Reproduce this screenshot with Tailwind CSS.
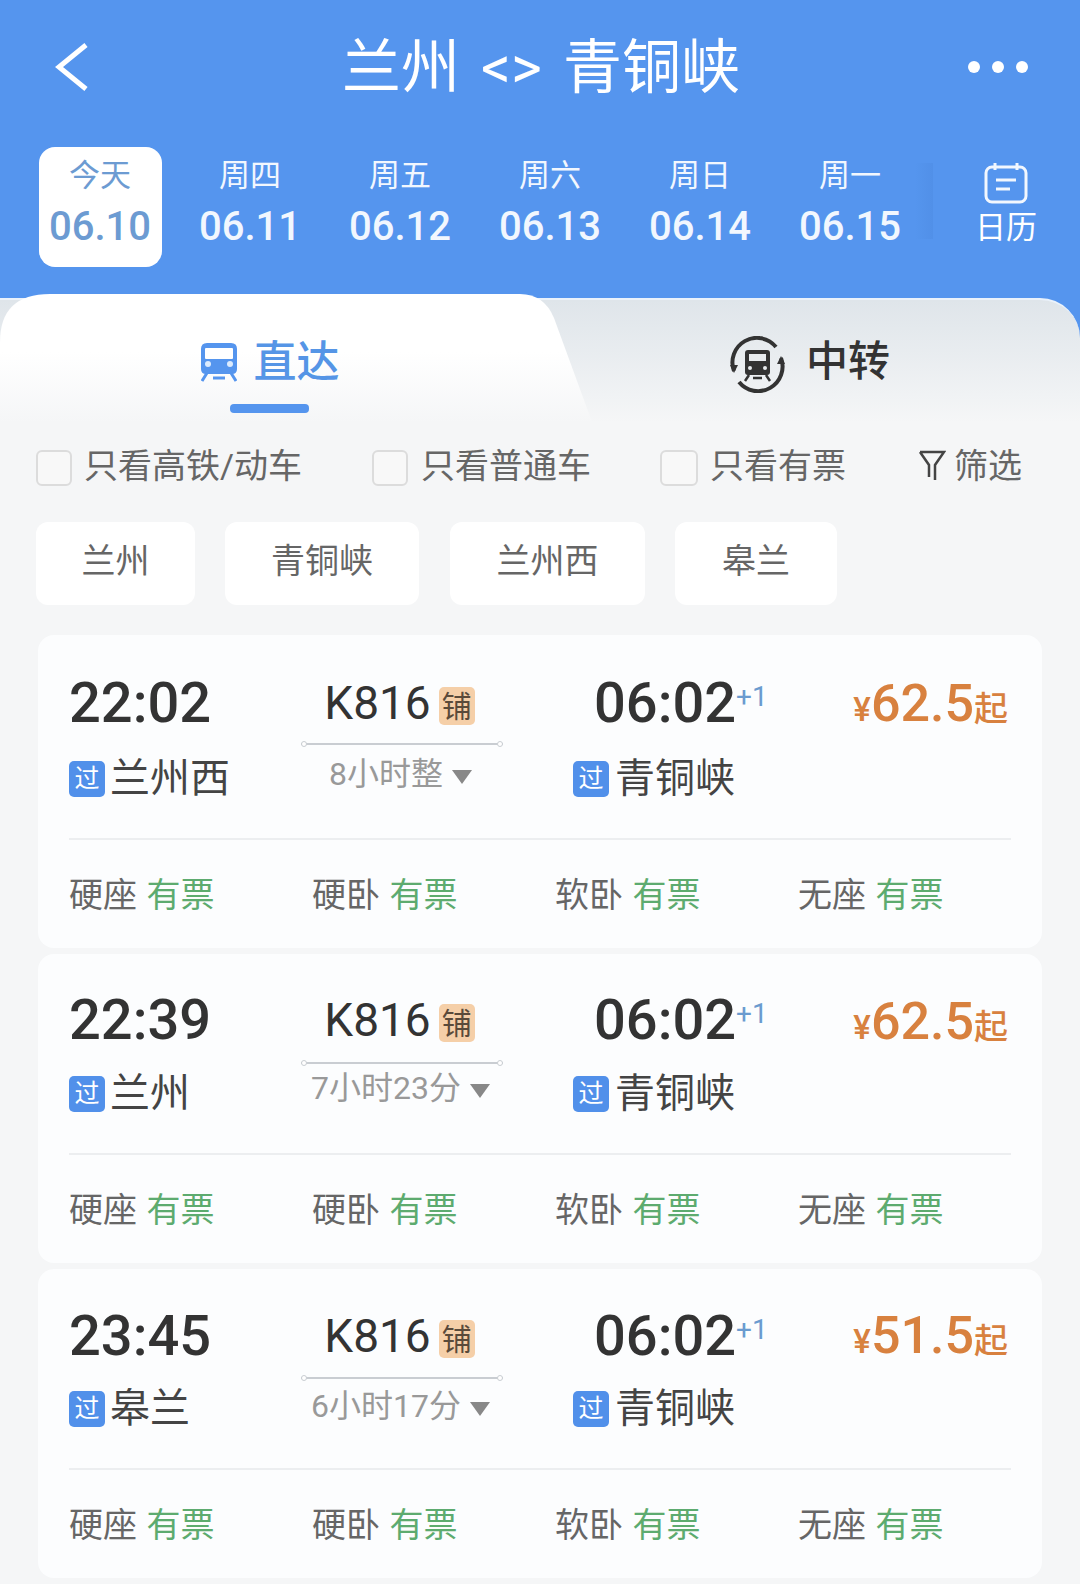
<!DOCTYPE html>
<html lang="zh">
<head>
  <meta charset="UTF-8">
  <title>兰州 &lt;&gt; 青铜峡</title>
  <script src="https://cdn.jsdelivr.net/npm/@tailwindcss/browser@4"></script>
</head>
<body class="bg-[#f5f6f7] font-['Roboto','Noto_Sans_CJK_SC',sans-serif]">
<div class="w-[1080px] h-[1584px] overflow-hidden">

  <!-- blue header -->
  <div class="bg-[#5595ee] text-white">
    <div class="flex items-center justify-between h-[134px] pl-[55px] pr-[52px]">
      <svg class="w-[34px] h-[48px]" viewBox="0 0 34 48" fill="none"><path d="M31 2 L4 24 L31 46" stroke="#fff" stroke-width="5"/></svg>
      <div class="text-[59px] leading-none flex items-center gap-[21px] ml-[25px]"><span>兰州</span><span>&lt;&gt;</span><span>青铜峡</span></div>
      <div class="flex gap-[12px]">
        <div class="w-[12px] h-[12px] rounded-full bg-white"></div>
        <div class="w-[12px] h-[12px] rounded-full bg-white"></div>
        <div class="w-[12px] h-[12px] rounded-full bg-white"></div>
      </div>
    </div>
    <div class="flex h-[164px] pt-[13px] pl-[25px]">
      <div class="w-[150px] flex justify-center">
        <div class="w-[123px] h-[120px] bg-white rounded-[16px] flex flex-col items-center text-[#6c9bd2]">
          <span class="text-[31px] leading-[36px] mt-[11px]">今天</span>
          <span class="text-[40px] leading-[44px] mt-[11px] font-medium">06.10</span>
        </div>
      </div>
      <div class="w-[150px] flex flex-col items-center text-[#f2f7fe]">
        <span class="text-[31px] leading-[36px] mt-[11px]">周四</span>
        <span class="text-[40px] leading-[44px] mt-[11px] font-medium">06.11</span>
      </div>
      <div class="w-[150px] flex flex-col items-center text-[#f2f7fe]">
        <span class="text-[31px] leading-[36px] mt-[11px]">周五</span>
        <span class="text-[40px] leading-[44px] mt-[11px] font-medium">06.12</span>
      </div>
      <div class="w-[150px] flex flex-col items-center text-[#f2f7fe]">
        <span class="text-[31px] leading-[36px] mt-[11px]">周六</span>
        <span class="text-[40px] leading-[44px] mt-[11px] font-medium">06.13</span>
      </div>
      <div class="w-[150px] flex flex-col items-center text-[#f2f7fe]">
        <span class="text-[31px] leading-[36px] mt-[11px]">周日</span>
        <span class="text-[40px] leading-[44px] mt-[11px] font-medium">06.14</span>
      </div>
      <div class="w-[150px] flex flex-col items-center text-[#f2f7fe]">
        <span class="text-[31px] leading-[36px] mt-[11px]">周一</span>
        <span class="text-[40px] leading-[44px] mt-[11px] font-medium">06.15</span>
      </div>
      <div class="w-[18px] h-[76px] mt-[16px] ml-[-10px] bg-gradient-to-r from-transparent to-[#5190e8]"></div>
      <div class="w-[146px] flex flex-col items-center">
        <svg class="w-[44px] h-[42px] mt-[15px]" viewBox="0 0 44 42" fill="none" stroke="#f2f7fe" stroke-width="3"><rect x="2" y="5" width="40" height="35" rx="6"/><path d="M11 1 V8 M33 1 V8 M12 18 H32 M12 27 H26"/></svg>
        <span class="text-[31px] leading-[36px] mt-[6px]">日历</span>
      </div>
    </div>
  </div>

  <!-- tabs, sits over the blue -->
  <div class="bg-[#5595ee]">
    <div class="relative h-[124px] rounded-tr-[40px] border-t-2 border-[#eaf2fb] bg-gradient-to-b from-[#dfe5ea] to-[#f5f6f7] flex">
      <svg class="absolute left-0 top-[-6px] w-[600px] h-[128px]" viewBox="0 0 600 128">
        <defs><linearGradient id="tabFill" x1="0" y1="0" x2="0" y2="1"><stop offset="0.45" stop-color="#ffffff"/><stop offset="1" stop-color="#f5f6f7"/></linearGradient></defs>
        <path d="M0 128 V48 Q0 0 50 0 H520 Q544 0 554 24 L592 128 Z" fill="url(#tabFill)"/>
      </svg>
      <div class="relative w-[540px] flex flex-col items-center">
        <div class="flex items-center gap-[17px] mt-[40px] ml-[0px] h-[44px]">
          <svg class="w-[36px] h-[39px]" viewBox="0 0 36 39" fill="none">
            <path fill="#5595ee" d="M6 0 H30 Q36 0 36 6 V26 Q36 31 31 31 H5 Q0 31 0 26 V6 Q0 0 6 0 Z"/>
            <rect x="4" y="5" width="28" height="11" rx="1" fill="#fff"/>
            <circle cx="7" cy="21" r="3" fill="#dcebfd"/><circle cx="29" cy="21" r="3" fill="#dcebfd"/>
            <path d="M6 30 L1 38 M30 30 L35 38 M12 35 H24" stroke="#5595ee" stroke-width="3"/>
          </svg>
          <span class="text-[43px] leading-none font-medium text-[#5595e6]">直达</span>
        </div>
        <div class="w-[79px] h-[9px] rounded-[4px] bg-[#5595ee] mt-[20px] ml-[-1px]"></div>
      </div>
      <div class="relative flex-1 flex items-start pl-[189px]">
        <div class="flex items-center gap-[20px] mt-[36px]">
          <svg class="w-[57px] h-[57px]" viewBox="0 0 57 57" fill="none">
            <path d="M5 35 A24.5 24.5 0 0 1 47 11 M52 22 A24.5 24.5 0 0 1 10 46" stroke="#333" stroke-width="4"/>
            <path d="M1 29 L9 29 L5 37 Z M56 28 L48 28 L52 20 Z" fill="#333"/>
            <path fill="#333" d="M19 14 H38 Q41 14 41 17 V36 Q41 39 38 39 H19 Q16 39 16 36 V17 Q16 14 19 14 Z"/>
            <rect x="20" y="18" width="17" height="7" fill="#e8ebee"/>
            <circle cx="21" cy="32" r="2" fill="#e8ebee"/><circle cx="36" cy="32" r="2" fill="#e8ebee"/>
            <path d="M20 39 L16 45 M37 39 L41 45 M24 42 H33" stroke="#333" stroke-width="2.5"/>
          </svg>
          <span class="text-[42px] leading-none font-medium text-[#333] mb-[6px]">中转</span>
        </div>
      </div>
    </div>
  </div>

  <!-- filters -->
  <div class="flex items-center h-[44px] mt-[22px] pl-[36px] text-[34px] text-[#666] relative">
    <div class="w-[36px] h-[36px] rounded-[6px] border-2 border-[#dcdcdc] bg-[#f8f8f8] mt-[4px]"></div>
    <span class="ml-[12px] leading-none">只看高铁/动车</span>
    <div class="w-[36px] h-[36px] rounded-[6px] border-2 border-[#dcdcdc] bg-[#f8f8f8] ml-[70px] mt-[4px]"></div>
    <span class="ml-[13px] leading-none">只看普通车</span>
    <div class="w-[38px] h-[36px] rounded-[6px] border-2 border-[#dcdcdc] bg-[#f8f8f8] ml-[69px] mt-[4px]"></div>
    <span class="ml-[12px] leading-none">只看有票</span>
    <svg class="w-[28px] h-[32px] ml-[72px]" viewBox="0 0 28 32" fill="none" stroke="#444" stroke-width="2.5"><path d="M2 2 H26 L17 15 V30 M2 2 L11 15 V27"/></svg>
    <span class="ml-[8px] leading-none">筛选</span>
  </div>

  <!-- station chips -->
  <div class="flex mt-[34px] ml-[36px] h-[83px] text-[34px] text-[#666]">
    <div class="w-[159px] rounded-[12px] bg-white flex items-center justify-center pb-[4px]">兰州</div>
    <div class="w-[194px] rounded-[12px] bg-white flex items-center justify-center pb-[4px] ml-[30px]">青铜峡</div>
    <div class="w-[195px] rounded-[12px] bg-white flex items-center justify-center pb-[4px] ml-[31px]">兰州西</div>
    <div class="w-[162px] rounded-[12px] bg-white flex items-center justify-center pb-[4px] ml-[30px]">皋兰</div>
  </div>

  <!-- trains -->
  <div class="flex flex-col gap-[6px] mt-[30px] ml-[38px] w-[1004px]">

    <div class="h-[313px] rounded-[16px] bg-[#fcfdfe] pl-[31px] pr-[31px]">
      <div class="flex h-[205px] border-b-2 border-[#eceef0]">
        <div class="w-[232px] pt-[33px]">
          <div class="text-[56px] leading-[70px] font-medium text-[#333]">22:02</div>
          <div class="flex items-center gap-[5px] h-[44px] mt-[19px]">
            <span class="w-[36px] h-[36px] rounded-[5px] bg-[#5190ea] text-white text-[25px] flex items-center justify-center">过</span>
            <span class="text-[40px] text-[#444]">兰州西</span>
          </div>
        </div>
        <div class="w-[202px] pt-[33px] flex flex-col items-center">
          <div class="flex items-center h-[70px] gap-[8px] mr-[5px]">
            <span class="text-[46px] text-[#333]">K816</span>
            <span class="w-[36px] h-[38px] mt-[6px] rounded-[5px] bg-[#f5cfa8] text-[#5a4a3a] text-[30px] flex items-center justify-center">铺</span>
          </div>
          <div class="relative w-full h-[2px] bg-[#c9cdd2] mt-[5px]">
            <span class="absolute left-0 top-[-2px] w-[6px] h-[6px] rounded-full border border-[#c9cdd2] bg-white"></span>
            <span class="absolute right-0 top-[-2px] w-[6px] h-[6px] rounded-full border border-[#c9cdd2] bg-white"></span>
          </div>
          <div class="flex items-center gap-[9px] h-[44px] mt-[7px] mr-[3px]">
            <span class="text-[32px] text-[#999]">8小时整</span>
            <span class="w-0 h-0 border-x-[10px] border-x-transparent border-t-[14px] border-t-[#888] mt-[6px]"></span>
          </div>
        </div>
        <div class="w-[270px] ml-[70px] pt-[33px]">
          <div class="flex h-[70px] ml-[21px]">
            <span class="text-[56px] leading-[70px] font-medium text-[#333]">06:02</span>
            <span class="text-[28px] leading-[30px] mt-[14px] text-[#6a9bcf]">+1</span>
          </div>
          <div class="flex items-center gap-[6px] h-[44px] mt-[19px]">
            <span class="w-[36px] h-[36px] rounded-[5px] bg-[#5190ea] text-white text-[25px] flex items-center justify-center">过</span>
            <span class="text-[40px] text-[#444]">青铜峡</span>
          </div>
        </div>
        <div class="flex-1 flex justify-end items-baseline pt-[30px] pr-[3px] h-[100px] text-[#d8813f]">
          <span class="text-[33px] font-medium">¥</span><span class="text-[52px] font-medium">62.5</span><span class="text-[34px] font-medium">起</span>
        </div>
      </div>
      <div class="grid grid-cols-[243px_243px_243px_1fr] mt-[31px] text-[34px] leading-[48px] text-[#666]">
        <div>硬座 <span class="text-[#5dab6f] ml-[1px]">有票</span></div>
        <div>硬卧 <span class="text-[#5dab6f] ml-[1px]">有票</span></div>
        <div>软卧 <span class="text-[#5dab6f] ml-[1px]">有票</span></div>
        <div>无座 <span class="text-[#5dab6f] ml-[1px]">有票</span></div>
      </div>
    </div>

    <div class="h-[309px] rounded-[16px] bg-[#fcfdfe] pl-[31px] pr-[31px]">
      <div class="flex h-[201px] border-b-2 border-[#eceef0]">
        <div class="w-[232px] pt-[31px]">
          <div class="text-[56px] leading-[70px] font-medium text-[#333]">22:39</div>
          <div class="flex items-center gap-[5px] h-[44px] mt-[17px]">
            <span class="w-[36px] h-[36px] rounded-[5px] bg-[#5190ea] text-white text-[25px] flex items-center justify-center">过</span>
            <span class="text-[40px] text-[#444]">兰州</span>
          </div>
        </div>
        <div class="w-[202px] pt-[31px] flex flex-col items-center">
          <div class="flex items-center h-[70px] gap-[8px] mr-[5px]">
            <span class="text-[46px] text-[#333]">K816</span>
            <span class="w-[36px] h-[38px] mt-[6px] rounded-[5px] bg-[#f5cfa8] text-[#5a4a3a] text-[30px] flex items-center justify-center">铺</span>
          </div>
          <div class="relative w-full h-[2px] bg-[#c9cdd2] mt-[7px]">
            <span class="absolute left-0 top-[-2px] w-[6px] h-[6px] rounded-full border border-[#c9cdd2] bg-white"></span>
            <span class="absolute right-0 top-[-2px] w-[6px] h-[6px] rounded-full border border-[#c9cdd2] bg-white"></span>
          </div>
          <div class="flex items-center gap-[9px] h-[44px] mt-[2px] mr-[3px]">
            <span class="text-[32px] text-[#999]">7小时23分</span>
            <span class="w-0 h-0 border-x-[10px] border-x-transparent border-t-[14px] border-t-[#888] mt-[6px]"></span>
          </div>
        </div>
        <div class="w-[270px] ml-[70px] pt-[31px]">
          <div class="flex h-[70px] ml-[21px]">
            <span class="text-[56px] leading-[70px] font-medium text-[#333]">06:02</span>
            <span class="text-[28px] leading-[30px] mt-[14px] text-[#6a9bcf]">+1</span>
          </div>
          <div class="flex items-center gap-[6px] h-[44px] mt-[17px]">
            <span class="w-[36px] h-[36px] rounded-[5px] bg-[#5190ea] text-white text-[25px] flex items-center justify-center">过</span>
            <span class="text-[40px] text-[#444]">青铜峡</span>
          </div>
        </div>
        <div class="flex-1 flex justify-end items-baseline pt-[29px] pr-[3px] h-[100px] text-[#d8813f]">
          <span class="text-[33px] font-medium">¥</span><span class="text-[52px] font-medium">62.5</span><span class="text-[34px] font-medium">起</span>
        </div>
      </div>
      <div class="grid grid-cols-[243px_243px_243px_1fr] mt-[31px] text-[34px] leading-[48px] text-[#666]">
        <div>硬座 <span class="text-[#5dab6f] ml-[1px]">有票</span></div>
        <div>硬卧 <span class="text-[#5dab6f] ml-[1px]">有票</span></div>
        <div>软卧 <span class="text-[#5dab6f] ml-[1px]">有票</span></div>
        <div>无座 <span class="text-[#5dab6f] ml-[1px]">有票</span></div>
      </div>
    </div>

    <div class="h-[309px] rounded-[16px] bg-[#fcfdfe] pl-[31px] pr-[31px]">
      <div class="flex h-[201px] border-b-2 border-[#eceef0]">
        <div class="w-[232px] pt-[32px]">
          <div class="text-[56px] leading-[70px] font-medium text-[#333]">23:45</div>
          <div class="flex items-center gap-[5px] h-[44px] mt-[16px]">
            <span class="w-[36px] h-[36px] rounded-[5px] bg-[#5190ea] text-white text-[25px] flex items-center justify-center">过</span>
            <span class="text-[40px] text-[#444]">皋兰</span>
          </div>
        </div>
        <div class="w-[202px] pt-[32px] flex flex-col items-center">
          <div class="flex items-center h-[70px] gap-[8px] mr-[5px]">
            <span class="text-[46px] text-[#333]">K816</span>
            <span class="w-[36px] h-[38px] mt-[6px] rounded-[5px] bg-[#f5cfa8] text-[#5a4a3a] text-[30px] flex items-center justify-center">铺</span>
          </div>
          <div class="relative w-full h-[2px] bg-[#c9cdd2] mt-[6px]">
            <span class="absolute left-0 top-[-2px] w-[6px] h-[6px] rounded-full border border-[#c9cdd2] bg-white"></span>
            <span class="absolute right-0 top-[-2px] w-[6px] h-[6px] rounded-full border border-[#c9cdd2] bg-white"></span>
          </div>
          <div class="flex items-center gap-[9px] h-[44px] mt-[5px] mr-[3px]">
            <span class="text-[32px] text-[#999]">6小时17分</span>
            <span class="w-0 h-0 border-x-[10px] border-x-transparent border-t-[14px] border-t-[#888] mt-[6px]"></span>
          </div>
        </div>
        <div class="w-[270px] ml-[70px] pt-[32px]">
          <div class="flex h-[70px] ml-[21px]">
            <span class="text-[56px] leading-[70px] font-medium text-[#333]">06:02</span>
            <span class="text-[28px] leading-[30px] mt-[14px] text-[#6a9bcf]">+1</span>
          </div>
          <div class="flex items-center gap-[6px] h-[44px] mt-[16px]">
            <span class="w-[36px] h-[36px] rounded-[5px] bg-[#5190ea] text-white text-[25px] flex items-center justify-center">过</span>
            <span class="text-[40px] text-[#444]">青铜峡</span>
          </div>
        </div>
        <div class="flex-1 flex justify-end items-baseline pt-[28px] pr-[3px] h-[100px] text-[#d8813f]">
          <span class="text-[33px] font-medium">¥</span><span class="text-[52px] font-medium">51.5</span><span class="text-[34px] font-medium">起</span>
        </div>
      </div>
      <div class="grid grid-cols-[243px_243px_243px_1fr] mt-[31px] text-[34px] leading-[48px] text-[#666]">
        <div>硬座 <span class="text-[#5dab6f] ml-[1px]">有票</span></div>
        <div>硬卧 <span class="text-[#5dab6f] ml-[1px]">有票</span></div>
        <div>软卧 <span class="text-[#5dab6f] ml-[1px]">有票</span></div>
        <div>无座 <span class="text-[#5dab6f] ml-[1px]">有票</span></div>
      </div>
    </div>

  </div>
</div>
</body>
</html>
